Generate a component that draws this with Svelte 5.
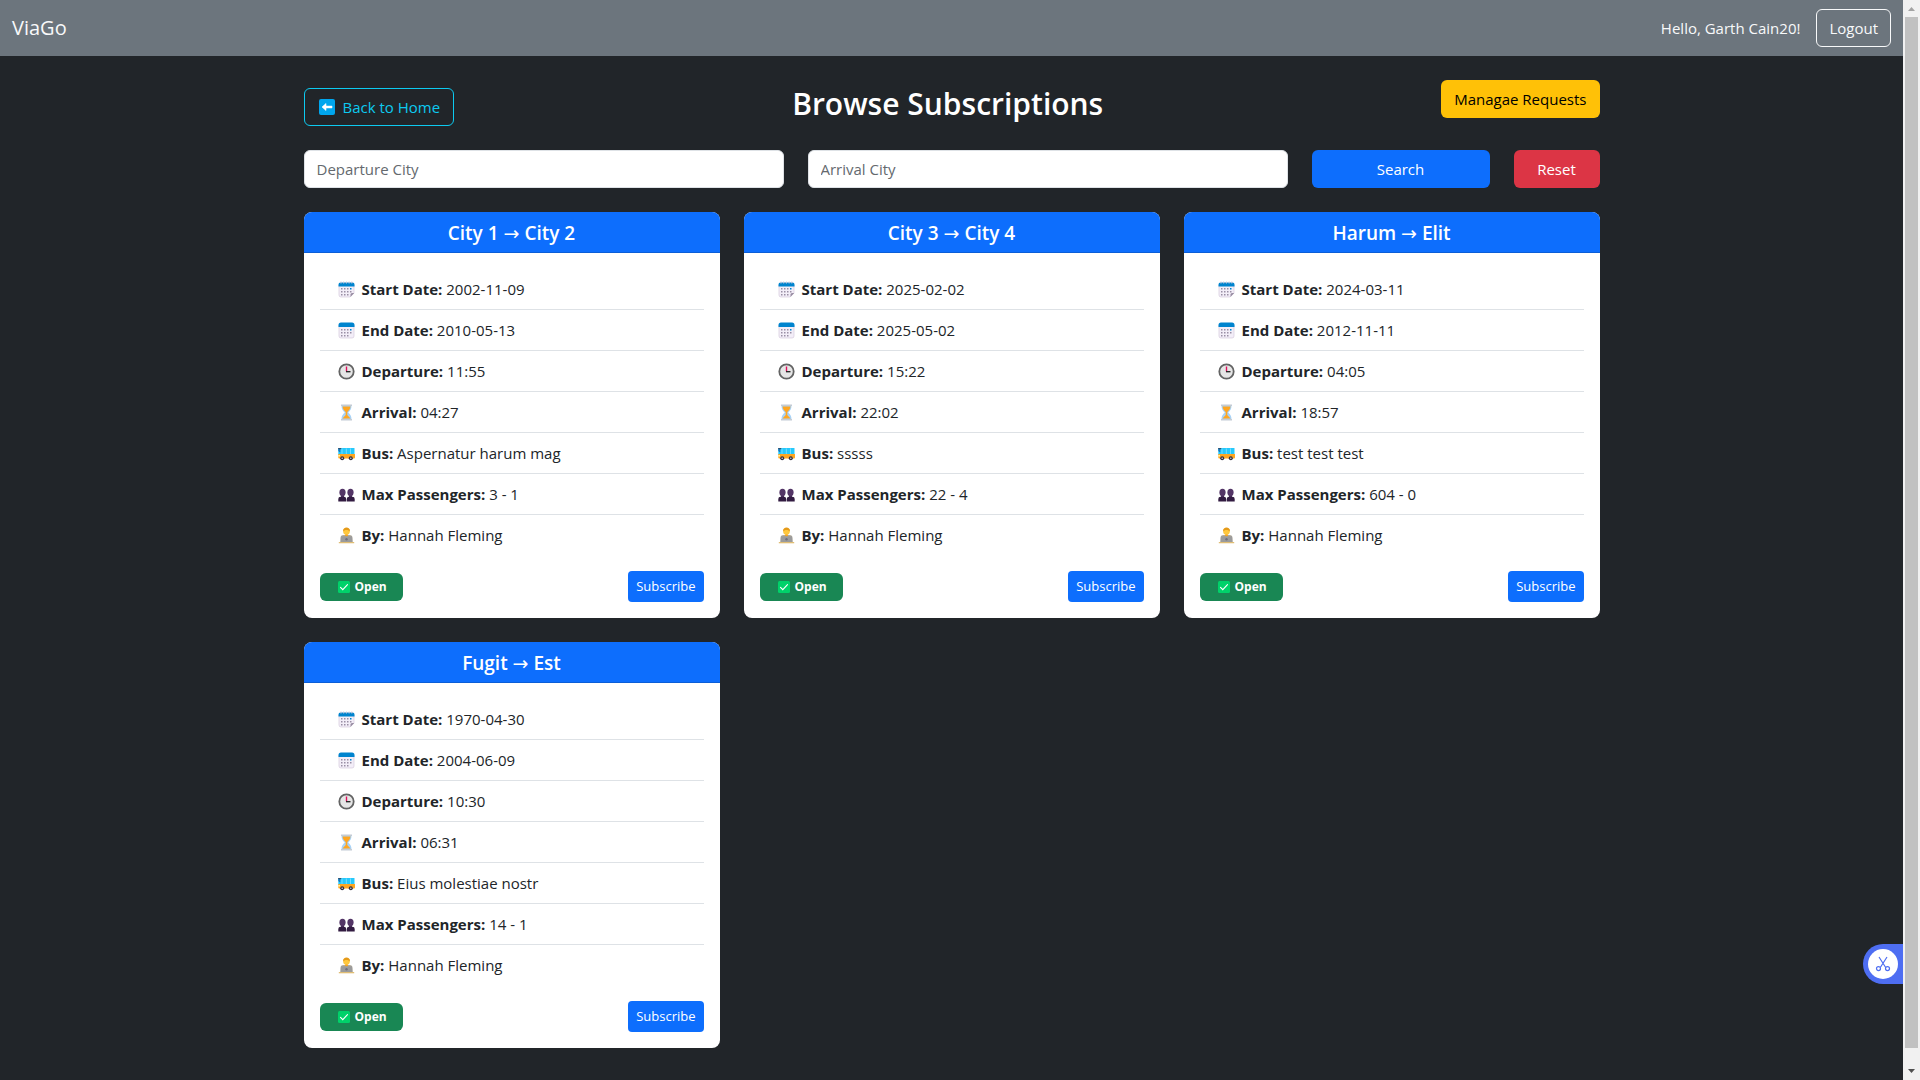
<script>
  const subscriptions = [
    { from: 'City 1', to: 'City 2', start: '2002-11-09', end: '2010-05-13', departure: '11:55', arrival: '04:27', bus: 'Aspernatur harum mag', passengers: '3 - 1', by: 'Hannah Fleming' },
    { from: 'City 3', to: 'City 4', start: '2025-02-02', end: '2025-05-02', departure: '15:22', arrival: '22:02', bus: 'sssss', passengers: '22 - 4', by: 'Hannah Fleming' },
    { from: 'Harum', to: 'Elit', start: '2024-03-11', end: '2012-11-11', departure: '04:05', arrival: '18:57', bus: 'test test test', passengers: '604 - 0', by: 'Hannah Fleming' },
    { from: 'Fugit', to: 'Est', start: '1970-04-30', end: '2004-06-09', departure: '10:30', arrival: '06:31', bus: 'Eius molestiae nostr', passengers: '14 - 1', by: 'Hannah Fleming' }
  ];

  const fields = [
    { key: 'start', label: 'Start Date:' },
    { key: 'end', label: 'End Date:' },
    { key: 'departure', label: 'Departure:' },
    { key: 'arrival', label: 'Arrival:' },
    { key: 'bus', label: 'Bus:' },
    { key: 'passengers', label: 'Max Passengers:' },
    { key: 'by', label: 'By:' }
  ];

  let departureCity = $state('');
  let arrivalCity = $state('');

  function reset() {
    departureCity = '';
    arrivalCity = '';
  }
</script>

{#snippet dots()}
  <path d="M3 7h1.500v1.500H3zM6 7h1.500v1.500H6zM9 7h1.500v1.500H9zM3 10h1.500v1.500H3zM6 10h1.500v1.500H6zM9 10h1.500v1.500H9zM3 13h1.500v1.500H3zM6 13h1.500v1.500H6zM9 13h1.500v1.500H9zM12 10h1.500v1.500H12z" fill="#998ea4" />
  <path d="M12 7h1.500v1.500H12z" fill="#0084ce" />
{/snippet}

{#snippet icon(name)}
  <svg class="icon" viewBox="0 0 17 17" aria-hidden="true">
    {#if name === 'start'}
      <path d="M1 4h15v7.500L12 16H3a2 2 0 0 1-2-2z" fill="#f3eef8" stroke="#d5cadd" stroke-width=".7" />
      <path d="M16.300 12 12.500 16v-2.500a1.500 1.500 0 0 1 1.500-1.500z" fill="#998ea4" />
      <path d="M.500 5.500v-2a2 2 0 0 1 2-2h12a2 2 0 0 1 2 2v2z" fill="#0084ce" />
      <path d="M3 .500v2M5.700.500v2M8.400.500v2M11.100.500v2M13.800.500v2" stroke="#cdc4d6" stroke-width="1" />
      {@render dots()}
    {:else if name === 'end'}
      <path d="M1 3h15v11a2 2 0 0 1-2 2H3a2 2 0 0 1-2-2z" fill="#f3eef8" stroke="#d5cadd" stroke-width=".7" />
      <path d="M.500 5V3A2.500 2.500 0 0 1 3 .500h11A2.500 2.500 0 0 1 16.500 3v2z" fill="#0084ce" />
      {@render dots()}
    {:else if name === 'departure'}
      <circle cx="8.500" cy="8.500" r="7.200" fill="#e6e6e6" stroke="#636363" stroke-width="1.800" />
      <path d="M8.500 3.500v5" stroke="#e0105c" stroke-width="1.400" />
      <path d="M8 8.700h4.500" stroke="#212121" stroke-width="1.300" />
    {:else if name === 'arrival'}
      <path d="M3.500 1.500h10c0 3.700-1.400 5.400-3.300 7 1.900 1.600 3.300 3.300 3.300 7h-10c0-3.700 1.400-5.400 3.300-7-1.900-1.600-3.300-3.300-3.300-7z" fill="#a7d2f7" />
      <path d="M4.500 2.500h8c-.4 2.600-1.500 4-3.200 5.400v3l3.200 3.600h-8l3.200-3.600v-3C6 6.500 4.900 5.100 4.500 2.500z" fill="#ffa51f" />
      <path d="M3 .500h11v1.600H3zM3 14.900h11v1.600H3z" fill="#c4cbd5" />
    {:else if name === 'bus'}
      <path d="M.300 3h16.200v7H.300z" fill="#26c9fc" />
      <path d="M.300 3h2v4h-1l-1-1z" fill="#187ac0" />
      <path d="M.300 3h3v1.200h-3z" fill="#35506a" />
      <path d="M4 3.500V9M8.300 3.500V9M12.500 3.500V9" stroke="#8ee2ff" stroke-width=".8" />
      <path d="M.300 9H17v3.500a1 1 0 0 1-1 1H1.300a1 1 0 0 1-1-1z" fill="#ffa51f" />
      <path d="M.300 10h1.700v1.500H.300z" fill="#fff3a0" />
      <circle cx="4.200" cy="13.300" r="2" fill="#35303e" /><circle cx="12.800" cy="13.300" r="2" fill="#35303e" />
      <circle cx="4.200" cy="13.300" r=".8" fill="#ccc" /><circle cx="12.800" cy="13.300" r=".8" fill="#ccc" />
    {:else if name === 'passengers'}
      <path d="M3 9h3v3H3zM11 9h3v3h-3z" fill="#462a58" />
      <ellipse cx="4.500" cy="6.400" rx="3.100" ry="3.700" fill="#533566" />
      <ellipse cx="12.500" cy="6.400" rx="3.100" ry="3.700" fill="#533566" />
      <path d="M.300 15.500V13A2.300 2.300 0 0 1 2.600 10.700l1.900.6 1.900-.6A2.200 2.200 0 0 1 8.200 13v2.500zM8.800 15.500V13a2.200 2.200 0 0 1 1.800-2.300l1.900.6 1.900-.6A2.300 2.300 0 0 1 16.700 13v2.500z" fill="#321b41" />
    {:else if name === 'by'}
      <path d="M2.500 16v-5a3 3 0 0 1 3-3h6a3 3 0 0 1 3 3v5z" fill="#b4ac9c" />
      <circle cx="8.500" cy="4.600" r="3.300" fill="#ffc83d" />
      <path d="M5 4.500C5 1.500 6.500.500 8.500.500S12 1.500 12 4.500C11 3.500 10 3 8.500 3S6 3.500 5 4.500z" fill="#e59a18" />
      <path d="M7 7.500h3V9l-1.500 1L7 9z" fill="#f5a623" />
      <path d="M3 9.300h11l.500 5.700h-12z" fill="#9b9b9b" />
      <path d="M.800 15h15.400v1.300H.800z" fill="#e0bd74" />
      <circle cx="8.500" cy="12.300" r="1.200" fill="#73707c" />
    {/if}
  </svg>
{/snippet}

<div class="page">
  <nav class="navbar">
    <a class="brand" href="/">ViaGo</a>
    <div class="account">
      <span>Hello, Garth Cain20!</span>
      <button class="btn outline-light" type="button">Logout</button>
    </div>
  </nav>

  <main class="container">
    <header class="heading">
      <a class="btn outline-info back" href="/">
        <svg class="back-icon" viewBox="0 0 16 16" aria-hidden="true">
          <rect width="16" height="16" rx="2" fill="#00a6ed" />
          <path d="M3 8l4-3.500v2.600h6v1.800H7v2.600z" fill="#fff" stroke="#fff" stroke-width=".6" stroke-linejoin="round" />
        </svg>
        Back to Home
      </a>
      <h1>Browse Subscriptions</h1>
      <a class="btn warning manage" href="/requests">Managae Requests</a>
    </header>

    <form class="filters" onsubmit={(event) => event.preventDefault()}>
      <input type="text" placeholder="Departure City" aria-label="Departure City" bind:value={departureCity} />
      <input type="text" placeholder="Arrival City" aria-label="Arrival City" bind:value={arrivalCity} />
      <div class="actions">
        <button class="btn primary search" type="submit">Search</button>
        <button class="btn danger reset" type="button" onclick={reset}>Reset</button>
      </div>
    </form>

    <section class="cards">
      {#each subscriptions as item}
        <article class="card">
          <h2>{item.from} <span class="arrow">→</span> {item.to}</h2>
          <div class="body">
            <ul>
              {#each fields as field}
                <li>
                  {@render icon(field.key)}
                  <span><strong>{field.label}</strong> {item[field.key]}</span>
                </li>
              {/each}
            </ul>
            <div class="foot">
              <span class="badge">
                <svg class="check" viewBox="0 0 12 12" aria-hidden="true">
                  <rect width="12" height="12" rx="1.500" fill="#00d26a" />
                  <path d="M2.500 6.300 4.800 8.600 9.500 3.600" fill="none" stroke="#fff" stroke-width="1.100" stroke-linecap="round" />
                </svg>
                Open
              </span>
              <button class="btn primary small" type="button">Subscribe</button>
            </div>
          </div>
        </article>
      {/each}
    </section>
  </main>
</div>

<button class="snip" type="button" aria-label="Snip">
  <span class="disc">
    <svg viewBox="0 0 16 16" aria-hidden="true">
      <g fill="none" stroke="#4e6ef2" stroke-width="1.200">
        <path d="M4 1l6.700 10.500M12 1 5.300 11.500" />
        <circle cx="3.500" cy="12.600" r="2" /><circle cx="12.500" cy="12.600" r="2" />
      </g>
    </svg>
  </span>
</button>

<div class="scrollbar" aria-hidden="true">
  <svg viewBox="0 0 17 17"><path d="M5 11h7L8.500 7z" fill="#a3a3a3" /></svg>
  <div class="track"><div class="thumb"></div></div>
  <svg viewBox="0 0 17 17"><path d="M5 6h7l-3.500 4z" fill="#505050" /></svg>
</div>

<style>
  :global(body) {
    background: #212529;
    color: #212529;
    font-family: "Segoe UI", "Open Sans", "Noto Sans", sans-serif;
    font-size: 15px;
    line-height: 24px;
  }
  .page, .page *, .snip, .scrollbar { box-sizing: border-box; }
  .page {
    min-height: 100vh;
    padding-right: 17px;
  }
  .navbar {
    display: flex;
    align-items: center;
    justify-content: space-between;
    padding: 9px 12px;
    background: #6c757d;
    color: #f8f9fa;
  }
  .brand {
    color: #f8f9fa;
    font-size: 20px;
    text-decoration: none;
  }
  .account {
    display: flex;
    align-items: center;
    gap: 16px;
  }
  .btn {
    display: inline-flex;
    align-items: center;
    justify-content: center;
    padding: 6px 12px;
    border: 1px solid transparent;
    border-radius: 6px;
    background: transparent;
    font: inherit;
    text-decoration: none;
    white-space: nowrap;
    cursor: pointer;
  }
  .outline-light { border-color: #f8f9fa; color: #f8f9fa; }
  .outline-info { border-color: #0dcaf0; color: #0dcaf0; }
  .warning { background: #ffc107; color: #000; }
  .primary { background: #0d6efd; color: #fff; }
  .danger { background: #dc3545; color: #fff; }
  .small {
    padding: 4px 8px;
    border: 0;
    border-radius: 4px;
    font-size: 13px;
    line-height: 23px;
  }
  .container {
    max-width: 1320px;
    margin: 0 auto;
    padding: 24px 12px 32px;
  }
  .heading {
    display: flex;
    justify-content: space-between;
    margin-bottom: 24px;
  }
  .back {
    align-self: flex-end;
    gap: 8px;
    padding: 6px 13px 6px 14px;
  }
  .back-icon { width: 16px; height: 16px; }
  .manage { align-self: flex-start; }
  h1 {
    margin: 0;
    color: #fff;
    font-size: 30px;
    font-weight: 600;
    line-height: 48px;
  }
  .filters {
    display: grid;
    grid-template-columns: 5fr 5fr 3fr;
    gap: 24px;
    margin-bottom: 24px;
  }
  .heading { height: 46px; }
  input {
    min-width: 0;
    height: 38px;
    padding: 6px 12px;
    border: 1px solid #dee2e6;
    border-radius: 6px;
    background: #fff;
    color: #212529;
    font: inherit;
  }
  input::placeholder { color: #64696e; opacity: 1; }
  .actions {
    display: flex;
    gap: 24px;
  }
  .search { flex: 1; }
  .reset { width: 86px; }
  .cards {
    display: grid;
    grid-template-columns: repeat(3, 1fr);
    gap: 24px;
  }
  .card {
    border-radius: 8px;
    background: #fff;
    overflow: hidden;
  }
  h2 {
    margin: 0;
    padding: 9px 16px 7px;
    border-bottom: 1px solid #0b5ed7;
    background: #0d6efd;
    color: #fff;
    font-size: 19px;
    font-weight: 600;
    line-height: 24px;
    text-align: center;
  }
  .arrow {
    font-family: "DejaVu Sans", sans-serif;
    font-weight: 400;
    line-height: 1;
  }
  .body { padding: 16px; }
  ul {
    margin: 0 0 16px;
    padding: 0;
    list-style: none;
  }
  li {
    display: flex;
    align-items: center;
    gap: 7px;
    padding: 8px 18px;
    border-bottom: 1px solid #dee2e6;
  }
  li:last-child { border-bottom: 0; }
  .icon { flex: none; width: 17px; height: 17px; }
  .foot {
    display: flex;
    align-items: center;
    justify-content: space-between;
  }
  .badge {
    display: inline-flex;
    align-items: center;
    gap: 5px;
    padding: 8px 16px 8px 18px;
    border-radius: 6px;
    background: #198754;
    color: #fff;
    font-size: 12px;
    font-weight: 700;
    line-height: 12px;
  }
  .check { width: 12px; height: 12px; }
  .snip {
    position: fixed;
    right: 17px;
    bottom: 96px;
    display: flex;
    align-items: center;
    width: 40px;
    height: 40px;
    padding: 5px;
    border: 0;
    border-radius: 20px 0 0 20px;
    background: #4e6ef2;
  }
  .disc {
    display: grid;
    place-items: center;
    width: 30px;
    height: 30px;
    border-radius: 50%;
    background: #fff;
  }
  .disc svg { width: 16px; height: 16px; }
  .scrollbar {
    position: fixed;
    top: 0;
    right: 0;
    bottom: 0;
    display: flex;
    flex-direction: column;
    width: 17px;
    background: #f1f1f1;
  }
  .scrollbar svg { flex: none; width: 17px; height: 17px; }
  .track {
    flex: 1;
    padding: 0 2px;
  }
  .thumb {
    height: 98.6%;
    background: #c1c1c1;
  }
</style>
